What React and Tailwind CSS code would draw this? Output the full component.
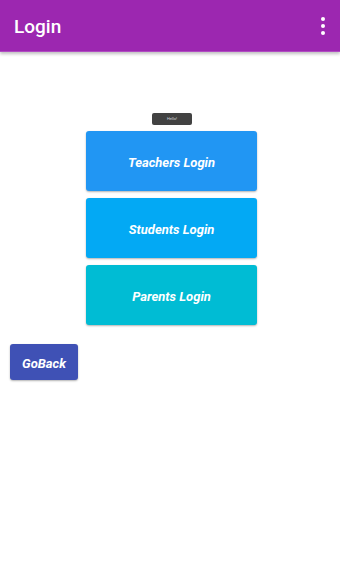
import React from "react";

export default function App() {
  return (
    <div className="w-[340px] h-[582px] bg-white flex flex-col" style={{ fontFamily: "Roboto, 'Liberation Sans', sans-serif" }}>
      <div className="h-[52px] bg-[#9c27b0] flex items-center justify-between pl-[14px] pr-[14px] shadow-[0_2px_3px_rgba(0,0,0,0.25)] border-b border-[#b04bc2] relative z-10">
        <span className="text-white text-[19px] font-medium mt-[3px]">Login</span>
        <div className="flex flex-col gap-[3px] items-center pr-[1px]">
          <span className="w-[4px] h-[4px] rounded-full bg-white"></span>
          <span className="w-[4px] h-[4px] rounded-full bg-white"></span>
          <span className="w-[4px] h-[4px] rounded-full bg-white"></span>
        </div>
      </div>
      <div className="flex flex-col items-center pt-[61px]">
        <div className="w-[40px] h-[12px] bg-[#424242] rounded-[2px] flex items-center justify-center ml-[4px]">
          <span className="text-[4px] text-gray-300 leading-none">Hello!</span>
        </div>
        <div className="flex flex-col gap-[7px] mt-[6px] ml-[3px]">
          <button className="w-[171px] h-[60px] pt-[3px] bg-[#2196f3] rounded-[3px] shadow-[0_1px_2px_rgba(0,0,0,0.3)] text-white text-[13px] font-bold italic">Teachers Login</button>
          <button className="w-[171px] h-[60px] pt-[3px] bg-[#03a9f4] rounded-[3px] shadow-[0_1px_2px_rgba(0,0,0,0.3)] text-white text-[13px] font-bold italic">Students Login</button>
          <button className="w-[171px] h-[60px] pt-[3px] bg-[#00bcd4] rounded-[3px] shadow-[0_1px_2px_rgba(0,0,0,0.3)] text-white text-[13px] font-bold italic">Parents Login</button>
        </div>
      </div>
      <div className="pl-[10px] mt-[19px]">
        <button className="w-[68px] h-[36px] pt-[3px] bg-[#3f51b5] rounded-[3px] shadow-[0_1px_2px_rgba(0,0,0,0.3)] text-white text-[13px] font-bold italic">GoBack</button>
      </div>
    </div>
  );
}
